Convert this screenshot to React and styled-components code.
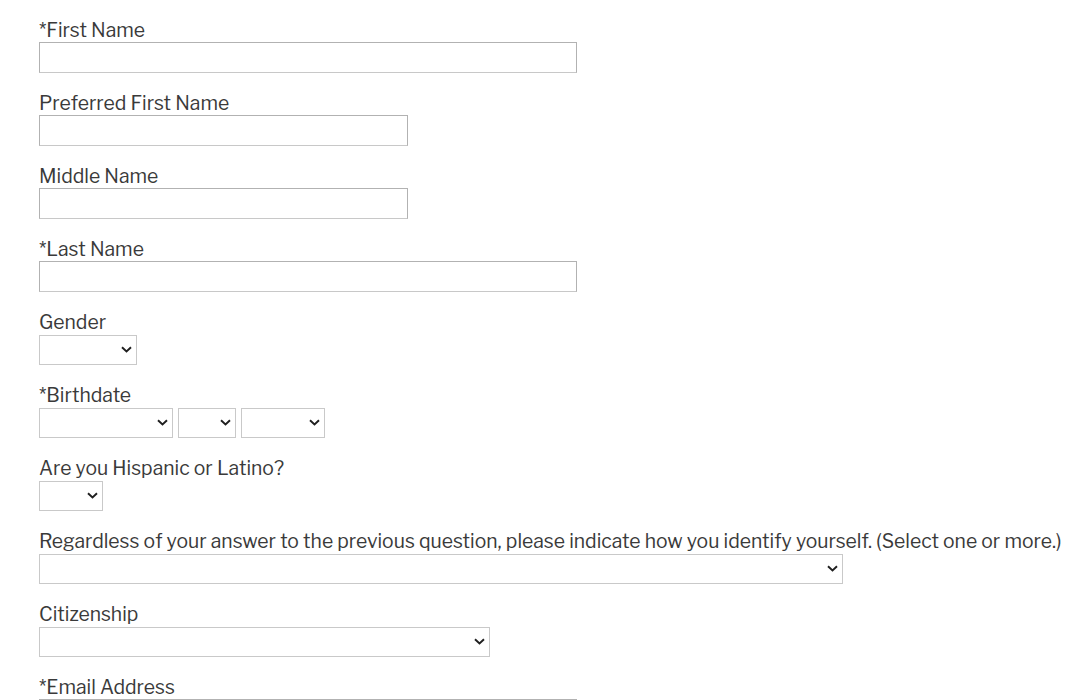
import React from "react";
import styled, { createGlobalStyle } from "styled-components";

const GlobalStyle = createGlobalStyle`
  body {
    margin: 0;
    background: #fff;
    font-family: 'Libre Franklin', 'Open Sans', sans-serif;
    color: #333;
  }
`;

const Form = styled.form`
  padding: 18px 0 0 39px;
`;

const Field = styled.div`
  margin-bottom: 18px;
`;

const Label = styled.label`
  display: block;
  font-size: 19.35px;
  line-height: 24px;
  color: #3a3a3a;
`;

const TextInput = styled.input`
  display: block;
  box-sizing: border-box;
  width: ${(p) => p.w}px;
  height: 31px;
  margin: 0;
  border: 1px solid #b2b2b2;
  border-bottom-color: #c8c8c8;
  background: #fff;
  outline: none;
`;

const Row = styled.div`
  display: flex;
  gap: 5px;
  margin-top: 1px;
`;

const SelectWrap = styled.div`
  position: relative;
  width: ${(p) => p.w}px;
  height: 30px;
  margin-top: ${(p) => (p.inRow ? 0 : 1)}px;
`;

const Select = styled.select`
  appearance: none;
  box-sizing: border-box;
  width: 100%;
  height: 100%;
  margin: 0;
  border: 1px solid #c9c9c9;
  border-radius: 0;
  background: #fff;
  font-size: 15px;
  color: #222;
`;

const Chevron = styled.svg`
  position: absolute;
  right: 5px;
  top: 11px;
  width: 11px;
  height: 7px;
  pointer-events: none;
`;

const Dropdown = ({ w, inRow }) => (
  <SelectWrap w={w} inRow={inRow}>
    <Select>
      <option></option>
    </Select>
    <Chevron viewBox="0 0 11 7">
      <path d="M1 1.2 L5.5 5.5 L10 1.2" fill="none" stroke="#1f1f1f" strokeWidth="1.9" />
    </Chevron>
  </SelectWrap>
);

const fields = [
  { label: "*First Name", w: 538 },
  { label: "Preferred First Name", w: 369 },
  { label: "Middle Name", w: 369 },
  { label: "*Last Name", w: 538 },
];

export default function App() {
  return (
    <>
      <GlobalStyle />
      <Form>
        {fields.map((f) => (
          <Field key={f.label}>
            <Label>{f.label}</Label>
            <TextInput type="text" w={f.w} />
          </Field>
        ))}
        <Field>
          <Label>Gender</Label>
          <Dropdown w={98} />
        </Field>
        <Field>
          <Label>*Birthdate</Label>
          <Row>
            <Dropdown w={134} inRow />
            <Dropdown w={58} inRow />
            <Dropdown w={84} inRow />
          </Row>
        </Field>
        <Field>
          <Label>Are you Hispanic or Latino?</Label>
          <Dropdown w={64} />
        </Field>
        <Field>
          <Label>
            Regardless of your answer to the previous question, please indicate
            how you identify yourself. (Select one or more.)
          </Label>
          <Dropdown w={804} />
        </Field>
        <Field>
          <Label>Citizenship</Label>
          <Dropdown w={451} />
        </Field>
        <Field>
          <Label>*Email Address</Label>
          <TextInput type="email" w={538} />
        </Field>
      </Form>
    </>
  );
}
